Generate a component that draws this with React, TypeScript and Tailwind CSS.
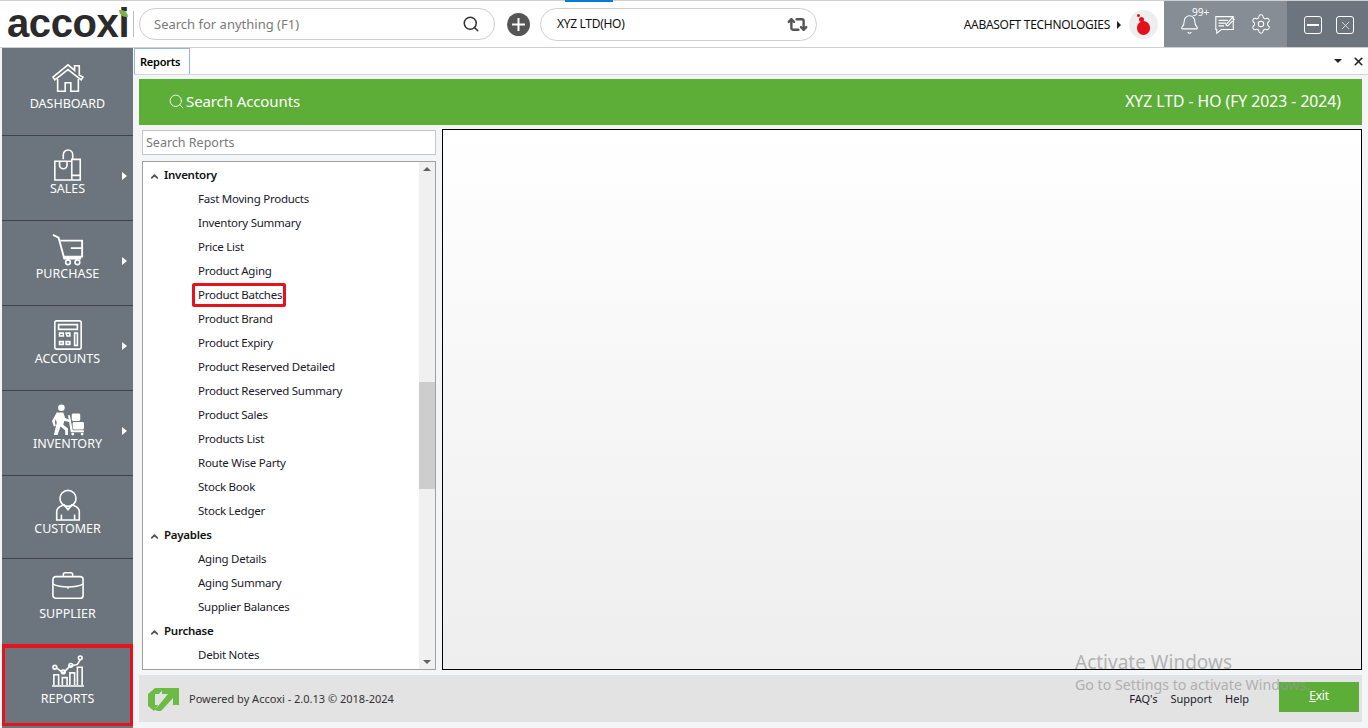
import { Bell, ChevronUp, Repeat2, Search, Settings, X } from "lucide-react";
import type { ReactNode } from "react";

const font = { fontFamily: '"Noto Sans", "Open Sans", sans-serif' };

function Svg({ children }: { children: ReactNode }) {
  return (
    <svg width="32" height="32" viewBox="0 0 34 34" fill="none" stroke="#fff" strokeWidth="1.700" className="shrink-0">
      {children}
    </svg>
  );
}

const HomeIcon = (
  <Svg>
    <path d="M1 16 17 3l7 6V4h5v10l4 2-2 3L17 8 3 19z" />
    <path d="M6 18v13h8v-9h6v9h8V18" />
  </Svg>
);
const SalesIcon = (
  <Svg>
    <path d="M3 13h18v20H3zM21 11h9v22h-9zM21 28h9" />
    <path d="M8 13v4a4 4 0 0 0 8 0v-4M12 11V6a5 5 0 0 1 10 0v5" />
  </Svg>
);
const CartIcon = (
  <Svg>
    <path d="M1 1l6 3 6 22h18M9 7h23v17H13M20 15h12" strokeWidth="2" />
    <circle cx="17" cy="30" r="2.500" />
    <circle cx="27" cy="30" r="2.500" />
  </Svg>
);
const CalcIcon = (
  <Svg>
    <rect x="3" y="2" width="28" height="30" rx="2" />
    <path d="M7 6h20v5H7zM24 15h3v13h-3zM8 15h4v3H8zM15 15h4v3h-3zM8 24h4v3H8zM15 24h4v3h-4z" />
  </Svg>
);
const InventoryIcon = (
  <svg width="32" height="32" viewBox="0 0 34 34" fill="#fff" className="shrink-0">
    <circle cx="10" cy="4" r="3.500" />
    <path d="M5 9h7l2 6 5 2v2l-6-1-1 4 5 4v7h-3v-5l-5-4-3 9H2l3-13-1-4-1 3 1 4-2 1-2-6z" />
    <rect x="21" y="10" width="9" height="8" rx="1.500" />
    <rect x="22" y="19" width="12" height="8" rx="1.500" />
    <path d="M17 12h2l3 16h12v2H20z" />
    <circle cx="22" cy="32" r="1.500" />
    <circle cx="32" cy="32" r="1.500" />
  </svg>
);
const CustomerIcon = (
  <Svg>
    <circle cx="17" cy="10" r="8.500" />
    <path d="M5 33v-9c0-4 4-6 8-7l4 5 4-5c4 1 8 3 8 7v9zM10 33v-6M24 33v-6" />
  </Svg>
);
const SupplierIcon = (
  <Svg>
    <path d="M12 7V5a2 2 0 0 1 2-2h6a2 2 0 0 1 2 2v2" />
    <rect x="1" y="7" width="32" height="23" rx="3" />
    <path d="M1 15c8 4 24 4 32 0M17 18v2" />
  </Svg>
);
const ReportsIcon = (
  <Svg>
    <path d="M0 33h34M2 32V21h5v11M11 32V24h5v8M19 32V19h5v13M27 32V13h5v19" />
    <path d="M5 14l7 5 7-7 8-2 3-5" />
    <circle cx="3" cy="13" r="2" />
    <circle cx="12" cy="18" r="2" />
    <circle cx="20" cy="11" r="2" />
    <circle cx="30" cy="3" r="2" />
  </Svg>
);

// divider rows are not all the same height in the app, so each carries its own spacing
const navItems = [
  { label: "DASHBOARD", icon: HomeIcon, arrow: false, box: "h-[88px] pt-[15px]", gap: "mt-[2px]" },
  { label: "SALES", icon: SalesIcon, arrow: true, box: "h-[85px] pt-[14px]", gap: "mt-0" },
  { label: "PURCHASE", icon: CartIcon, arrow: true, box: "h-[85px] pt-[14px]", gap: "mt-0" },
  { label: "ACCOUNTS", icon: CalcIcon, arrow: true, box: "h-[85px] pt-[14px]", gap: "mt-0" },
  { label: "INVENTORY", icon: InventoryIcon, arrow: true, box: "h-[85px] pt-[14px]", gap: "mt-0" },
  { label: "CUSTOMER", icon: CustomerIcon, arrow: false, box: "h-[83px] pt-[14px]", gap: "mt-0" },
  { label: "SUPPLIER", icon: SupplierIcon, arrow: false, box: "h-[85px] pt-[12px] border-b-0", gap: "mt-[4px]" },
];

const tree = [
  {
    title: "Inventory",
    items: [
      "Fast Moving Products",
      "Inventory Summary",
      "Price List",
      "Product Aging",
      "Product Batches",
      "Product Brand",
      "Product Expiry",
      "Product Reserved Detailed",
      "Product Reserved Summary",
      "Product Sales",
      "Products List",
      "Route Wise Party",
      "Stock Book",
      "Stock Ledger",
    ],
  },
  { title: "Payables", items: ["Aging Details", "Aging Summary", "Supplier Balances"] },
  { title: "Purchase", items: ["Debit Notes"] },
];

function NavItem({ label, icon, arrow, box, gap }: { label: string; icon: ReactNode; arrow: boolean; box: string; gap: string }) {
  return (
    <div className={`relative flex shrink-0 flex-col items-center border-b border-[#3f4448] text-white ${box}`}>
      <div className="flex h-[30px] items-center justify-center">{icon}</div>
      <span className={`text-[12.500px] leading-[17px] tracking-normal ${gap}`}>{label}</span>
      {arrow && (
        <span className="absolute top-[36px] right-[6px] h-0 w-0 border-y-[4px] border-l-[5px] border-y-transparent border-l-white" />
      )}
    </div>
  );
}

export default function App() {
  return (
    <div className="relative flex h-[728px] w-[1368px] flex-col overflow-hidden bg-[#f4f5f7] text-[11.500px] tracking-[-0.25px] text-[#1a1a2a]" style={font}>
      {/* top bar */}
      <header className="relative flex h-[48px] shrink-0 items-center border-y border-[#d0d0d0] bg-white">
        <span className="absolute top-[-1px] left-[565px] h-[2px] w-[48px] bg-[#0a7bd6]" />
        <div className="flex h-[26px] w-[134px] items-center border-r border-[#c0c0c0] pl-[7px]">
          <span className="relative mt-[-2px] text-[40px] leading-none font-bold tracking-[-0.4px] text-[#2b2b2b]" style={{ fontFamily: '"Liberation Sans", sans-serif' }}>
            accoxi
            <span className="absolute top-[7px] right-[1px] h-[7px] w-[9px] rounded-tr-[7px] rounded-bl-[7px] bg-[#7cb342]" />
          </span>
        </div>
        <div className="ml-[5px] flex h-[32px] w-[356px] items-center justify-between rounded-full border border-[#cfcfcf] pr-[14px] pl-[14px]">
          <span className="pt-px text-[13px] tracking-normal text-[#7a7a7a]">Search for anything (F1)</span>
          <Search size={18} strokeWidth={2} className="text-[#333]" />
        </div>
        <div className="ml-[12px] flex h-[23px] w-[23px] items-center justify-center rounded-full bg-[#555] text-white">
          <svg width="15" height="15" viewBox="0 0 15 15" stroke="#fff" strokeWidth="2">
            <path d="M7.500 1v13M1 7.500h13" />
          </svg>
        </div>
        <div className="ml-[10px] flex h-[33px] w-[277px] items-center justify-between rounded-full border border-[#cfcfcf] pr-[8px] pl-[16px]">
          <span className="text-[12px] tracking-[-0.3px] text-[#111]">XYZ LTD(HO)</span>
          <Repeat2 size={21} strokeWidth={2.800} className="text-[#555]" />
        </div>
        <div className="ml-auto flex items-center">
          <span className="mt-[2px] text-[12px] tracking-[-0.3px] text-[#111]">AABASOFT TECHNOLOGIES</span>
          <span className="mt-[2px] ml-[7px] h-0 w-0 border-y-[4px] border-l-[4px] border-y-transparent border-l-[#222]" />
          <div className="relative mr-[6px] ml-[8px] h-[29px] w-[29px] rounded-full bg-[#eeeeee]">
            <span className="absolute top-[11px] left-[8px] h-[14px] w-[13px] rounded-full bg-[#e0101c]" />
            <span className="absolute top-[7px] left-[10px] h-[5px] w-[5px] rounded-full bg-[#e0101c]" />
            <span className="absolute top-[4px] left-[8px] h-[3px] w-[3px] rounded-full bg-[#e0101c]" />
          </div>
          <div className="relative flex h-[46px] w-[123px] items-center gap-[14px] bg-[#868d94] pl-[15px] text-white">
            <Bell size={21} strokeWidth={1.200} />
            <span className="absolute top-[6px] left-[28px] text-[10px] leading-none tracking-normal">99+</span>
            <svg width="22" height="22" viewBox="0 0 24 24" fill="none" stroke="#fff" strokeWidth="1.200">
              <path d="M2 4h19v14H8l-5 4v-4H2zM5 8h10M5 11h8M5 14h6M13 13l7-8 2 2-7 7z" />
            </svg>
            <Settings size={22} strokeWidth={1.100} />
          </div>
          <div className="flex h-[46px] w-[81px] items-center gap-[14px] bg-[#6c757d] pt-[2px] pl-[17px]">
            <span className="flex h-[18px] w-[18px] items-center justify-center rounded-[3px] border border-white">
              <span className="h-[1.500px] w-[12px] bg-white" />
            </span>
            <span className="flex h-[18px] w-[18px] items-center justify-center rounded-[3px] border border-white text-white">
              <X size={13} strokeWidth={1.300} />
            </span>
          </div>
        </div>
      </header>

      <div className="flex min-h-0 flex-1">
        {/* sidebar */}
        <aside className="ml-[2px] flex w-[131px] shrink-0 flex-col bg-[#6c757d]">
          {navItems.map((n) => (
            <NavItem key={n.label} {...n} />
          ))}
          <div className="mb-[2px] flex flex-1 flex-col items-center border-[3px] border-t-[4px] border-[#e3141b] pt-[8px] text-white">
            <div className="flex h-[30px] items-center justify-center">{ReportsIcon}</div>
            <span className="mt-[4px] text-[12.500px] leading-[17px] tracking-normal">REPORTS</span>
          </div>
        </aside>

        <main className="flex min-w-0 flex-1 flex-col pl-px">
          {/* tab strip */}
          <div className="flex h-[27px] shrink-0 items-end justify-between border-b border-[#d5d5d5] bg-white">
            <div className="flex h-[26px] w-[56px] items-center border-x border-t border-[#8fb8dc] bg-white pt-px pl-[5px] text-[11px] font-semibold text-black">
              Reports
            </div>
            <div className="flex h-[26px] items-center gap-[10px] pr-[3px]">
              <span className="h-0 w-0 border-x-[4px] border-t-[4px] border-x-transparent border-t-[#222]" />
              <X size={13} strokeWidth={3} className="text-[#222]" />
            </div>
          </div>

          <div className="flex min-h-0 flex-1 flex-col pt-[4px] pr-[6px] pb-[6px] pl-[5px]">
            {/* banner */}
            <div className="flex h-[46px] shrink-0 items-center justify-between bg-[#5dae39] pr-[21px] pl-[29px] text-white">
              <div className="flex items-center gap-[1px] pb-[2px]">
                <Search size={17} strokeWidth={1.200} />
                <span className="text-[15px] tracking-[-0.1px]">Search Accounts</span>
              </div>
              <span className="text-[15.700px] tracking-normal">XYZ LTD - HO (FY 2023 - 2024)</span>
            </div>

            <div className="flex min-h-0 flex-1 gap-[6px] pt-[4px] pb-[5px]">
              <div className="flex w-[297px] shrink-0 flex-col gap-[6px] pl-[3px]">
                <div className="mt-px flex h-[25px] shrink-0 items-center border border-[#c6c6c6] bg-white pt-[2px] pl-[3px] text-[12.500px] tracking-normal text-[#7a7a7a]">
                  Search Reports
                </div>
                {/* report tree */}
                <div className="flex min-h-0 flex-1 border border-[#a0a0a0] bg-white">
                  <div className="min-w-0 flex-1 overflow-hidden pt-px">
                    {tree.map((g) => (
                      <div key={g.title}>
                        <div className="flex h-[24px] items-center pl-[6px] font-semibold text-[#111]">
                          <ChevronUp size={11} strokeWidth={4} className="mt-[3px] text-[#555]" />
                          <span className="ml-[4px]">{g.title}</span>
                        </div>
                        {g.items.map((it) => (
                          <div key={it} className="flex h-[24px] items-center pl-[55px] text-[#1a1a2a]">
                            {it === "Product Batches" ? (
                              <span className="-ml-[6px] rounded-[2px] border-[3px] border-[#e3141b] pr-[1px] pl-[3px] leading-[18px]">{it}</span>
                            ) : (
                              it
                            )}
                          </div>
                        ))}
                      </div>
                    ))}
                  </div>
                  <div className="relative w-[16px] shrink-0 bg-[#f0f0f0]">
                    <span className="absolute top-[5px] left-[4px] h-0 w-0 border-x-[4px] border-b-[4px] border-x-transparent border-b-[#606060]" />
                    <span className="absolute top-[220px] left-0 h-[107px] w-full bg-[#cdcdcd]" />
                    <span className="absolute bottom-[5px] left-[4px] h-0 w-0 border-x-[4px] border-t-[4px] border-x-transparent border-t-[#606060]" />
                  </div>
                </div>
              </div>
              <div className="min-w-0 flex-1 border border-black bg-gradient-to-b from-white to-[#eeeeee]" />
            </div>

            {/* footer */}
            <div className="flex h-[47px] shrink-0 items-center bg-[#e3e3e3] pr-[3px] pl-[9px]">
              <svg width="31" height="23" viewBox="0 0 31 23" fill="#6cbb45" className="mt-[1px]">
                <path d="M7 0h9l-5 6H7v11h3l-4 6-6-5V6z" />
                <path d="M14 0h17v17h-6v-7L14 22H9l-3 0 5-5L20 6h-6zM12 18h5l-4 5H8z" />
              </svg>
              <span className="mt-[1px] ml-[10px] text-[11px] tracking-normal text-[#333]">Powered by Accoxi - 2.0.13 © 2018-2024</span>
              <div className="mt-[1px] ml-auto flex items-center gap-[13px] text-[11px] tracking-normal text-[#1a1a2a]">
                <span>FAQ's</span>
                <span>Support</span>
                <span>Help</span>
              </div>
              <div className="mb-[3px] ml-[30px] flex h-[30px] w-[80px] items-center justify-center bg-[#5dae39] pb-[2px] text-[12px] text-white">
                <span><u>E</u>xit</span>
              </div>
            </div>
          </div>
        </main>
      </div>

      {/* windows watermark */}
      <div className="pointer-events-none absolute top-[650px] left-[1075px] tracking-normal text-[#9a9a9a] opacity-70">
        <div className="text-[19px] leading-[24px]">Activate Windows</div>
        <div className="mt-[2px] text-[14.200px] leading-[18px] whitespace-nowrap">Go to Settings to activate Windows.</div>
      </div>
    </div>
  );
}
